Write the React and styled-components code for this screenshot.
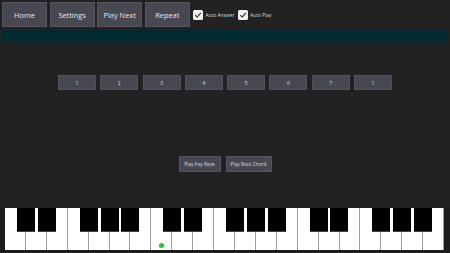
import styled, { createGlobalStyle } from "styled-components";

const GlobalStyle = createGlobalStyle`
  html, body {
    margin: 0;
    padding: 0;
    background-color: #222222;
    font-family: "Open Sans", "Liberation Sans", sans-serif;
  }
`;

const Page = styled.div`
  width: 450px;
  height: 253px;
  display: flex;
  flex-direction: column;
  background-color: #222222;
  overflow: hidden;
`;

const Toolbar = styled.div`
  display: flex;
  align-items: center;
  gap: 2.6px;
  padding: 2px 2px 0 2px;
  height: 25px;
`;

const ToolButton = styled.button`
  width: 45px;
  height: 25px;
  padding: 0;
  background-color: #484853;
  border: 1px solid #55555f;
  color: #e4e4e4;
  font-family: inherit;
  font-size: 7.4px;
`;

const CheckLabel = styled.label`
  display: flex;
  align-items: center;
  gap: 2px;
  margin-left: 1px;
  color: #d8d8d8;
  font-size: 4.9px;
`;

const CheckBox = styled.span`
  width: 10px;
  height: 10px;
  border-radius: 1.5px;
  background-color: #f2f2f2;
  display: flex;
  align-items: center;
  justify-content: center;
`;

const ProgressBar = styled.div`
  margin: 3px 2px 0 2px;
  height: 11px;
  background-color: #002b33;
`;

const Main = styled.div`
  flex: 1;
  display: flex;
  flex-direction: column;
  align-items: center;
`;

const NumberRow = styled.div`
  display: flex;
  gap: 4.3px;
  margin-top: 34px;
`;

const NumberButton = styled.button`
  width: 38px;
  height: 15px;
  padding: 0;
  background-color: #484853;
  border: 1px solid #52525c;
  color: #dcdcdc;
  font-family: inherit;
  font-size: 5px;
`;

const PlayRow = styled.div`
  display: flex;
  gap: 5px;
  margin-top: 66px;
`;

const PlayButton = styled.button`
  width: ${(p) => p.$w}px;
  height: 16px;
  padding: 0;
  background-color: #484853;
  border: 1px solid #55555f;
  color: #dcdcdc;
  font-family: inherit;
  font-size: 4.8px;
`;

const PianoFrame = styled.div`
  margin-top: 35px;
  padding: 0 6px 3px 5px;
  background-color: #1c1c1c;
`;

const Keyboard = styled.div`
  position: relative;
  display: flex;
  height: 42px;
`;

const WhiteKey = styled.div`
  flex: 1;
  position: relative;
  background-color: #ffffff;
  border-right: 1px solid #9c9c9c;
  &:last-child {
    border-right: none;
  }
`;

const BlackKey = styled.div`
  position: absolute;
  top: 0;
  width: 18px;
  height: 23px;
  background-color: #000000;
  border-bottom: 1px solid #444;
`;

const Dot = styled.span`
  position: absolute;
  left: 50%;
  bottom: 2px;
  width: 5px;
  height: 5px;
  margin-left: -2.5px;
  border-radius: 50%;
  background-color: #22c83a;
`;

const Check = () => (
  <svg width="8" height="8" viewBox="0 0 10 10">
    <path d="M1.6 5.2 L4 7.6 L8.6 2.4" fill="none" stroke="#222" strokeWidth="1.3" />
  </svg>
);

const numbers = ["1", "2", "3", "4", "5", "6", "7", "1"];
const WHITE_COUNT = 21;
// black keys sit on the boundary after C, D, F, G, A of each octave
const blackBoundaries = [];
for (let o = 0; o < 3; o++) {
  [1, 2, 4, 5, 6].forEach((b) => blackBoundaries.push(o * 7 + b));
}

export default function App() {
  return (
    <Page>
      <GlobalStyle />
      <Toolbar>
        <ToolButton>Home</ToolButton>
        <ToolButton>Settings</ToolButton>
        <ToolButton>Play Next</ToolButton>
        <ToolButton>Repeat</ToolButton>
        <CheckLabel>
          <CheckBox><Check /></CheckBox>
          Auto Answer
        </CheckLabel>
        <CheckLabel>
          <CheckBox><Check /></CheckBox>
          Auto Play
        </CheckLabel>
      </Toolbar>
      <ProgressBar />
      <Main>
        <NumberRow>
          {numbers.map((n, i) => (
            <NumberButton key={i}>{n}</NumberButton>
          ))}
        </NumberRow>
        <PlayRow>
          <PlayButton $w={42}>Play Key Note</PlayButton>
          <PlayButton $w={46}>Play Root Chord</PlayButton>
        </PlayRow>
      </Main>
      <PianoFrame>
        <Keyboard>
          {Array.from({ length: WHITE_COUNT }).map((_, i) => (
            <WhiteKey key={i}>{i === 7 && <Dot />}</WhiteKey>
          ))}
          {blackBoundaries.map((b) => (
            <BlackKey
              key={b}
              style={{ left: `calc(${(b / WHITE_COUNT) * 100}% - 9px)` }}
            />
          ))}
        </Keyboard>
      </PianoFrame>
    </Page>
  );
}
